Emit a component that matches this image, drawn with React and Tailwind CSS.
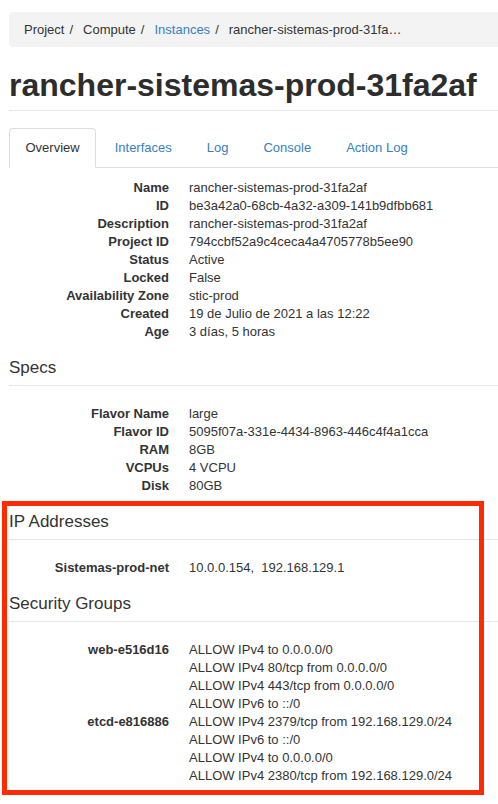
import React from "react";

const font = { fontFamily: '"Liberation Sans", Arial, Helvetica, sans-serif' };

function Row({ label, values }) {
  return (
    <div className="flex">
      <div className="w-[160px] shrink-0 text-right font-bold">{label}</div>
      <div className="ml-[20px]">
        {values.map((v, i) => (
          <div key={i}>{v}</div>
        ))}
      </div>
    </div>
  );
}

function DL({ rows, className = "" }) {
  return (
    <div className={"leading-[18px] " + className}>
      {rows.map((r, i) => (
        <Row key={i} label={r[0]} values={Array.isArray(r[1]) ? r[1] : [r[1]]} />
      ))}
    </div>
  );
}

function Heading({ children }) {
  return (
    <div className="mt-[17px] text-[17px] leading-[20px] pb-[7px] border-b border-[#e6e6e6] text-[#333]">
      {children}
    </div>
  );
}

export default function App() {
  const overview = [
    ["Name", "rancher-sistemas-prod-31fa2af"],
    ["ID", "be3a42a0-68cb-4a32-a309-141b9dfbb681"],
    ["Description", "rancher-sistemas-prod-31fa2af"],
    ["Project ID", "794ccbf52a9c4ceca4a4705778b5ee90"],
    ["Status", "Active"],
    ["Locked", "False"],
    ["Availability Zone", "stic-prod"],
    ["Created", "19 de Julio de 2021 a las 12:22"],
    ["Age", "3 días, 5 horas"],
  ];
  const specs = [
    ["Flavor Name", "large"],
    ["Flavor ID", "5095f07a-331e-4434-8963-446c4f4a1cca"],
    ["RAM", "8GB"],
    ["VCPUs", "4 VCPU"],
    ["Disk", "80GB"],
  ];
  const ips = [["Sistemas-prod-net", "10.0.0.154,\u00a0\u00a0192.168.129.1"]];
  const sgs = [
    [
      "web-e516d16",
      [
        "ALLOW IPv4 to 0.0.0.0/0",
        "ALLOW IPv4 80/tcp from 0.0.0.0/0",
        "ALLOW IPv4 443/tcp from 0.0.0.0/0",
        "ALLOW IPv6 to ::/0",
      ],
    ],
    [
      "etcd-e816886",
      [
        "ALLOW IPv4 2379/tcp from 192.168.129.0/24",
        "ALLOW IPv6 to ::/0",
        "ALLOW IPv4 to 0.0.0.0/0",
        "ALLOW IPv4 2380/tcp from 192.168.129.0/24",
      ],
    ],
  ];
  const tabs = ["Overview", "Interfaces", "Log", "Console", "Action Log"];

  return (
    <div className="relative w-[498px] h-[804px] overflow-hidden bg-white text-[13px] text-[#333]" style={font}>
      <div className="pl-[9px]">
        {/* Breadcrumb */}
        <div className="mt-[12px] bg-[#f3f3f3] rounded-l-[4px] py-[8px] pl-[15px] leading-[19px] whitespace-nowrap">
          <span>Project</span>
          <span className="pl-[5px] pr-[10px]">/</span>
          <span>Compute</span>
          <span className="pl-[5px] pr-[10px]">/</span>
          <span className="text-[#3780c2]">Instances</span>
          <span className="pl-[5px] pr-[10px]">/</span>
          <span>rancher-sistemas-prod-31fa…</span>
        </div>

        {/* Title */}
        <div className="mt-[20px] text-[32px] leading-[36px] font-bold pb-[7px] border-b border-[#e6e6e6] text-[#2d2d2d] whitespace-nowrap">
          rancher-sistemas-prod-31fa2af
        </div>

        {/* Tabs */}
        <div className="mt-[17px] flex border-b border-[#ddd]">
          {tabs.map((t, i) => (
            <div
              key={t}
              className={
                "-mb-px mr-[2px] px-[15.5px] py-[10px] leading-[18px] border rounded-t-[4px] " +
                (i === 0
                  ? "border-[#ddd] border-b-white bg-white text-[#333]"
                  : "border-transparent text-[#3780c2]")
              }
            >
              {t}
            </div>
          ))}
        </div>

        <DL rows={overview} className="mt-[11px]" />

        <Heading>Specs</Heading>
        <DL rows={specs} className="mt-[19px]" />

        <Heading>IP Addresses</Heading>
        <DL rows={ips} className="mt-[19px]" />

        <Heading>Security Groups</Heading>
        <DL rows={sgs} className="mt-[19px]" />
      </div>

      {/* Annotation box */}
      <div className="absolute left-[2px] top-[501px] w-[482px] h-[294px] border-[5px] border-[#ff2a00] pointer-events-none" />
    </div>
  );
}
